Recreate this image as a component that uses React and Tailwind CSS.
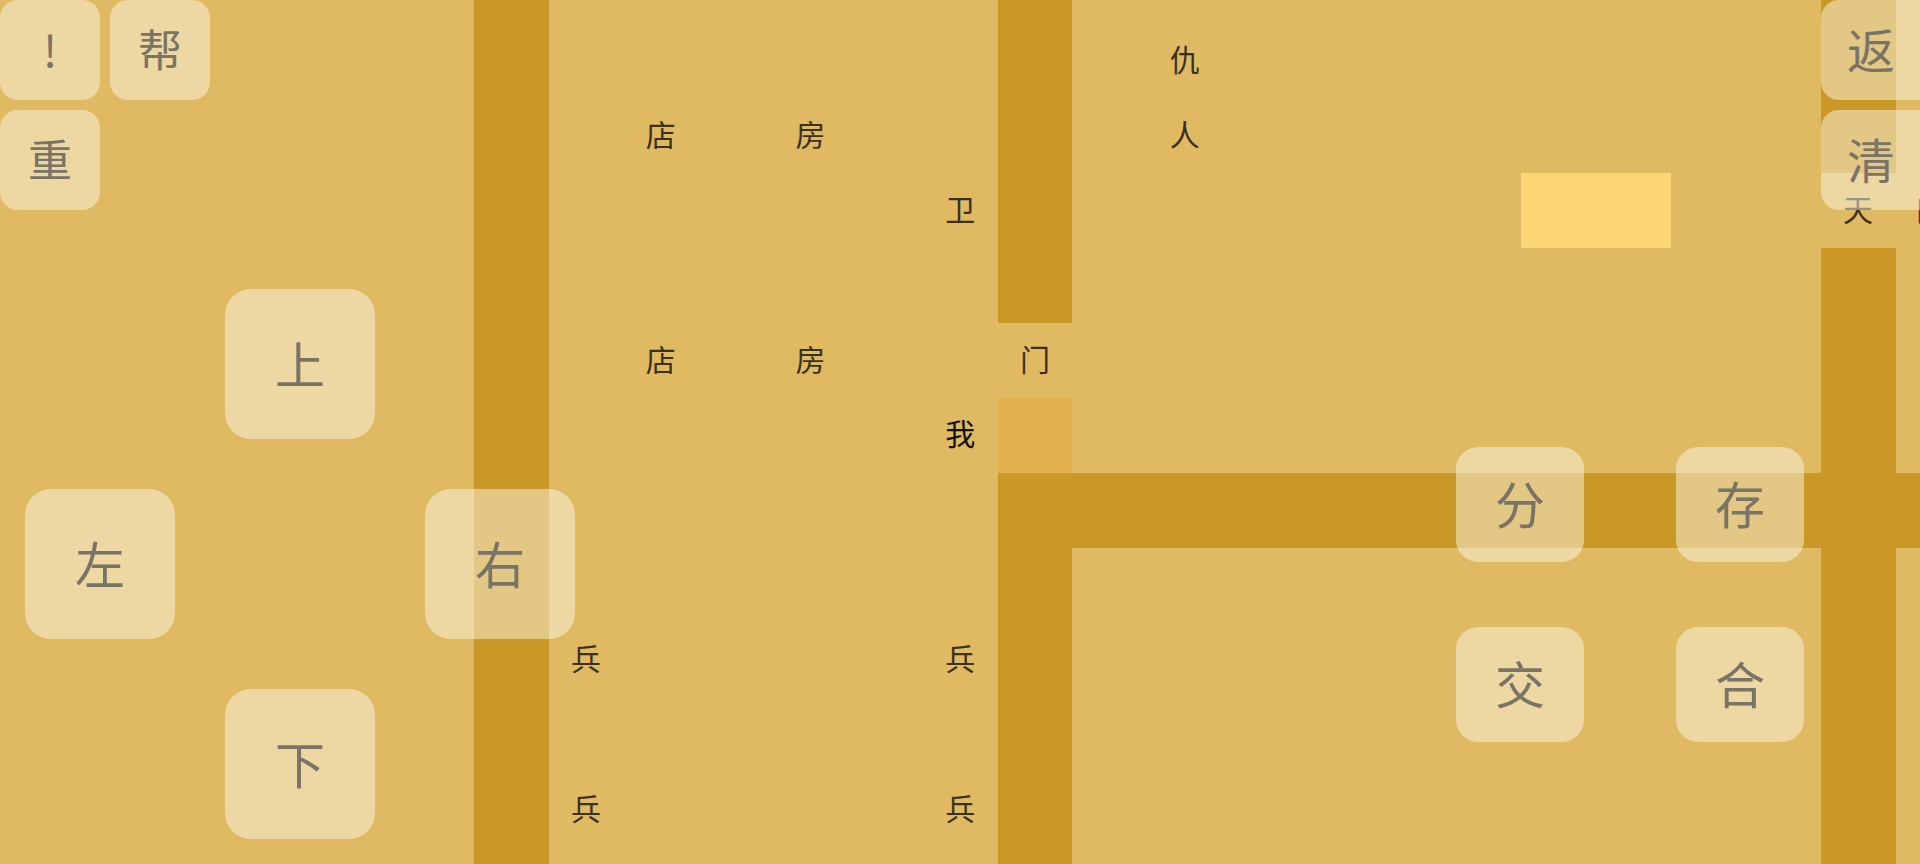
import React from "react";

const COLS = 27;
const ROWS = 13;

// k = column index, r = row index; both start at -1 (partial first cell)
function cellType(k, r) {
  if (k === 6) return "wall";
  if (k === 13 && (r <= 3 || r >= 6)) return "wall";
  if (r === 6 && k >= 13) return "wall";
  if (k === 24 && (r <= 1 || r >= 3)) return "wall";
  if (r === 2 && (k === 20 || k === 21)) return "hl";
  if (k === 13 && r === 5) return "special";
  return "floor";
}

const labels = {
  "8,1": "店",
  "10,1": "房",
  "15,0": "仇",
  "15,1": "人",
  "12,2": "卫",
  "8,4": "店",
  "10,4": "房",
  "13,4": "门",
  "12,5": "我",
  "7,8": "兵",
  "12,8": "兵",
  "7,10": "兵",
  "12,10": "兵",
  "24,2": "天",
  "25,2": "口",
};

const cellClass = {
  wall: "bg-[#ca9826]",
  hl: "bg-[#fcd574]",
  special: "bg-[#e2b150]",
  floor: "",
};

function labelClass(label, k) {
  if (label === "我") return "text-[30px] leading-none text-[#151310]";
  if (k === 25) return "text-[30px] leading-none text-[#3a311e] -translate-x-[3px]";
  return "text-[30px] leading-none text-[#3a311e]";
}

function MapGrid() {
  const cells = [];
  for (let r = -1; r < ROWS - 1; r++) {
    for (let k = -1; k < COLS - 1; k++) {
      const t = cellType(k, r);
      const label = labels[`${k},${r}`];
      cells.push(
        <div
          key={`${k}-${r}`}
          className={`flex items-center justify-center pb-[6px] ${cellClass[t]}`}
        >
          {label ? <span className={labelClass(label, k)}>{label}</span> : null}
        </div>
      );
    }
  }
  return (
    <div className="-ml-[50px] -mt-[51px] grid grid-cols-[repeat(27,74.83px)] grid-rows-[repeat(13,74.83px)]">
      {cells}
    </div>
  );
}

function Btn({ children, className }) {
  return (
    <div
      className={`absolute flex items-center justify-center bg-[rgba(250,246,228,0.5)] pb-[5px] text-[#7a7467] leading-none ${className}`}
    >
      {children}
    </div>
  );
}

export default function App() {
  return (
    <div className="relative h-[864px] w-[1920px] overflow-hidden bg-[#e0b963] font-['Noto_Sans_CJK_SC','Noto_Sans',sans-serif]">
      <MapGrid />

      {/* top-left buttons */}
      <Btn className="left-0 top-0 h-[100px] w-[100px] rounded-[18px] text-[44px]">!</Btn>
      <Btn className="left-[110px] top-0 h-[100px] w-[100px] rounded-[18px] text-[44px]">帮</Btn>
      <Btn className="left-0 top-[110px] h-[100px] w-[100px] rounded-[18px] text-[44px]">重</Btn>

      {/* d-pad */}
      <Btn className="left-[225px] top-[289px] h-[150px] w-[150px] rounded-[26px] text-[50px]">上</Btn>
      <Btn className="left-[25px] top-[489px] h-[150px] w-[150px] rounded-[26px] text-[50px]">左</Btn>
      <Btn className="left-[425px] top-[489px] h-[150px] w-[150px] rounded-[26px] text-[50px]">右</Btn>
      <Btn className="left-[225px] top-[689px] h-[150px] w-[150px] rounded-[26px] text-[50px]">下</Btn>

      {/* top-right buttons */}
      <Btn className="left-[1821px] top-0 h-[100px] w-[128px] rounded-[18px] pr-[28px] text-[48px]">返</Btn>
      <Btn className="left-[1821px] top-[110px] h-[100px] w-[128px] rounded-[18px] pr-[28px] text-[48px]">清</Btn>

      {/* bottom-right buttons */}
      <Btn className="left-[1456px] top-[447px] h-[115px] w-[128px] rounded-[22px] text-[50px]">分</Btn>
      <Btn className="left-[1676px] top-[447px] h-[115px] w-[128px] rounded-[22px] text-[50px]">存</Btn>
      <Btn className="left-[1456px] top-[627px] h-[115px] w-[128px] rounded-[22px] text-[50px]">交</Btn>
      <Btn className="left-[1676px] top-[627px] h-[115px] w-[128px] rounded-[22px] text-[50px]">合</Btn>
    </div>
  );
}
